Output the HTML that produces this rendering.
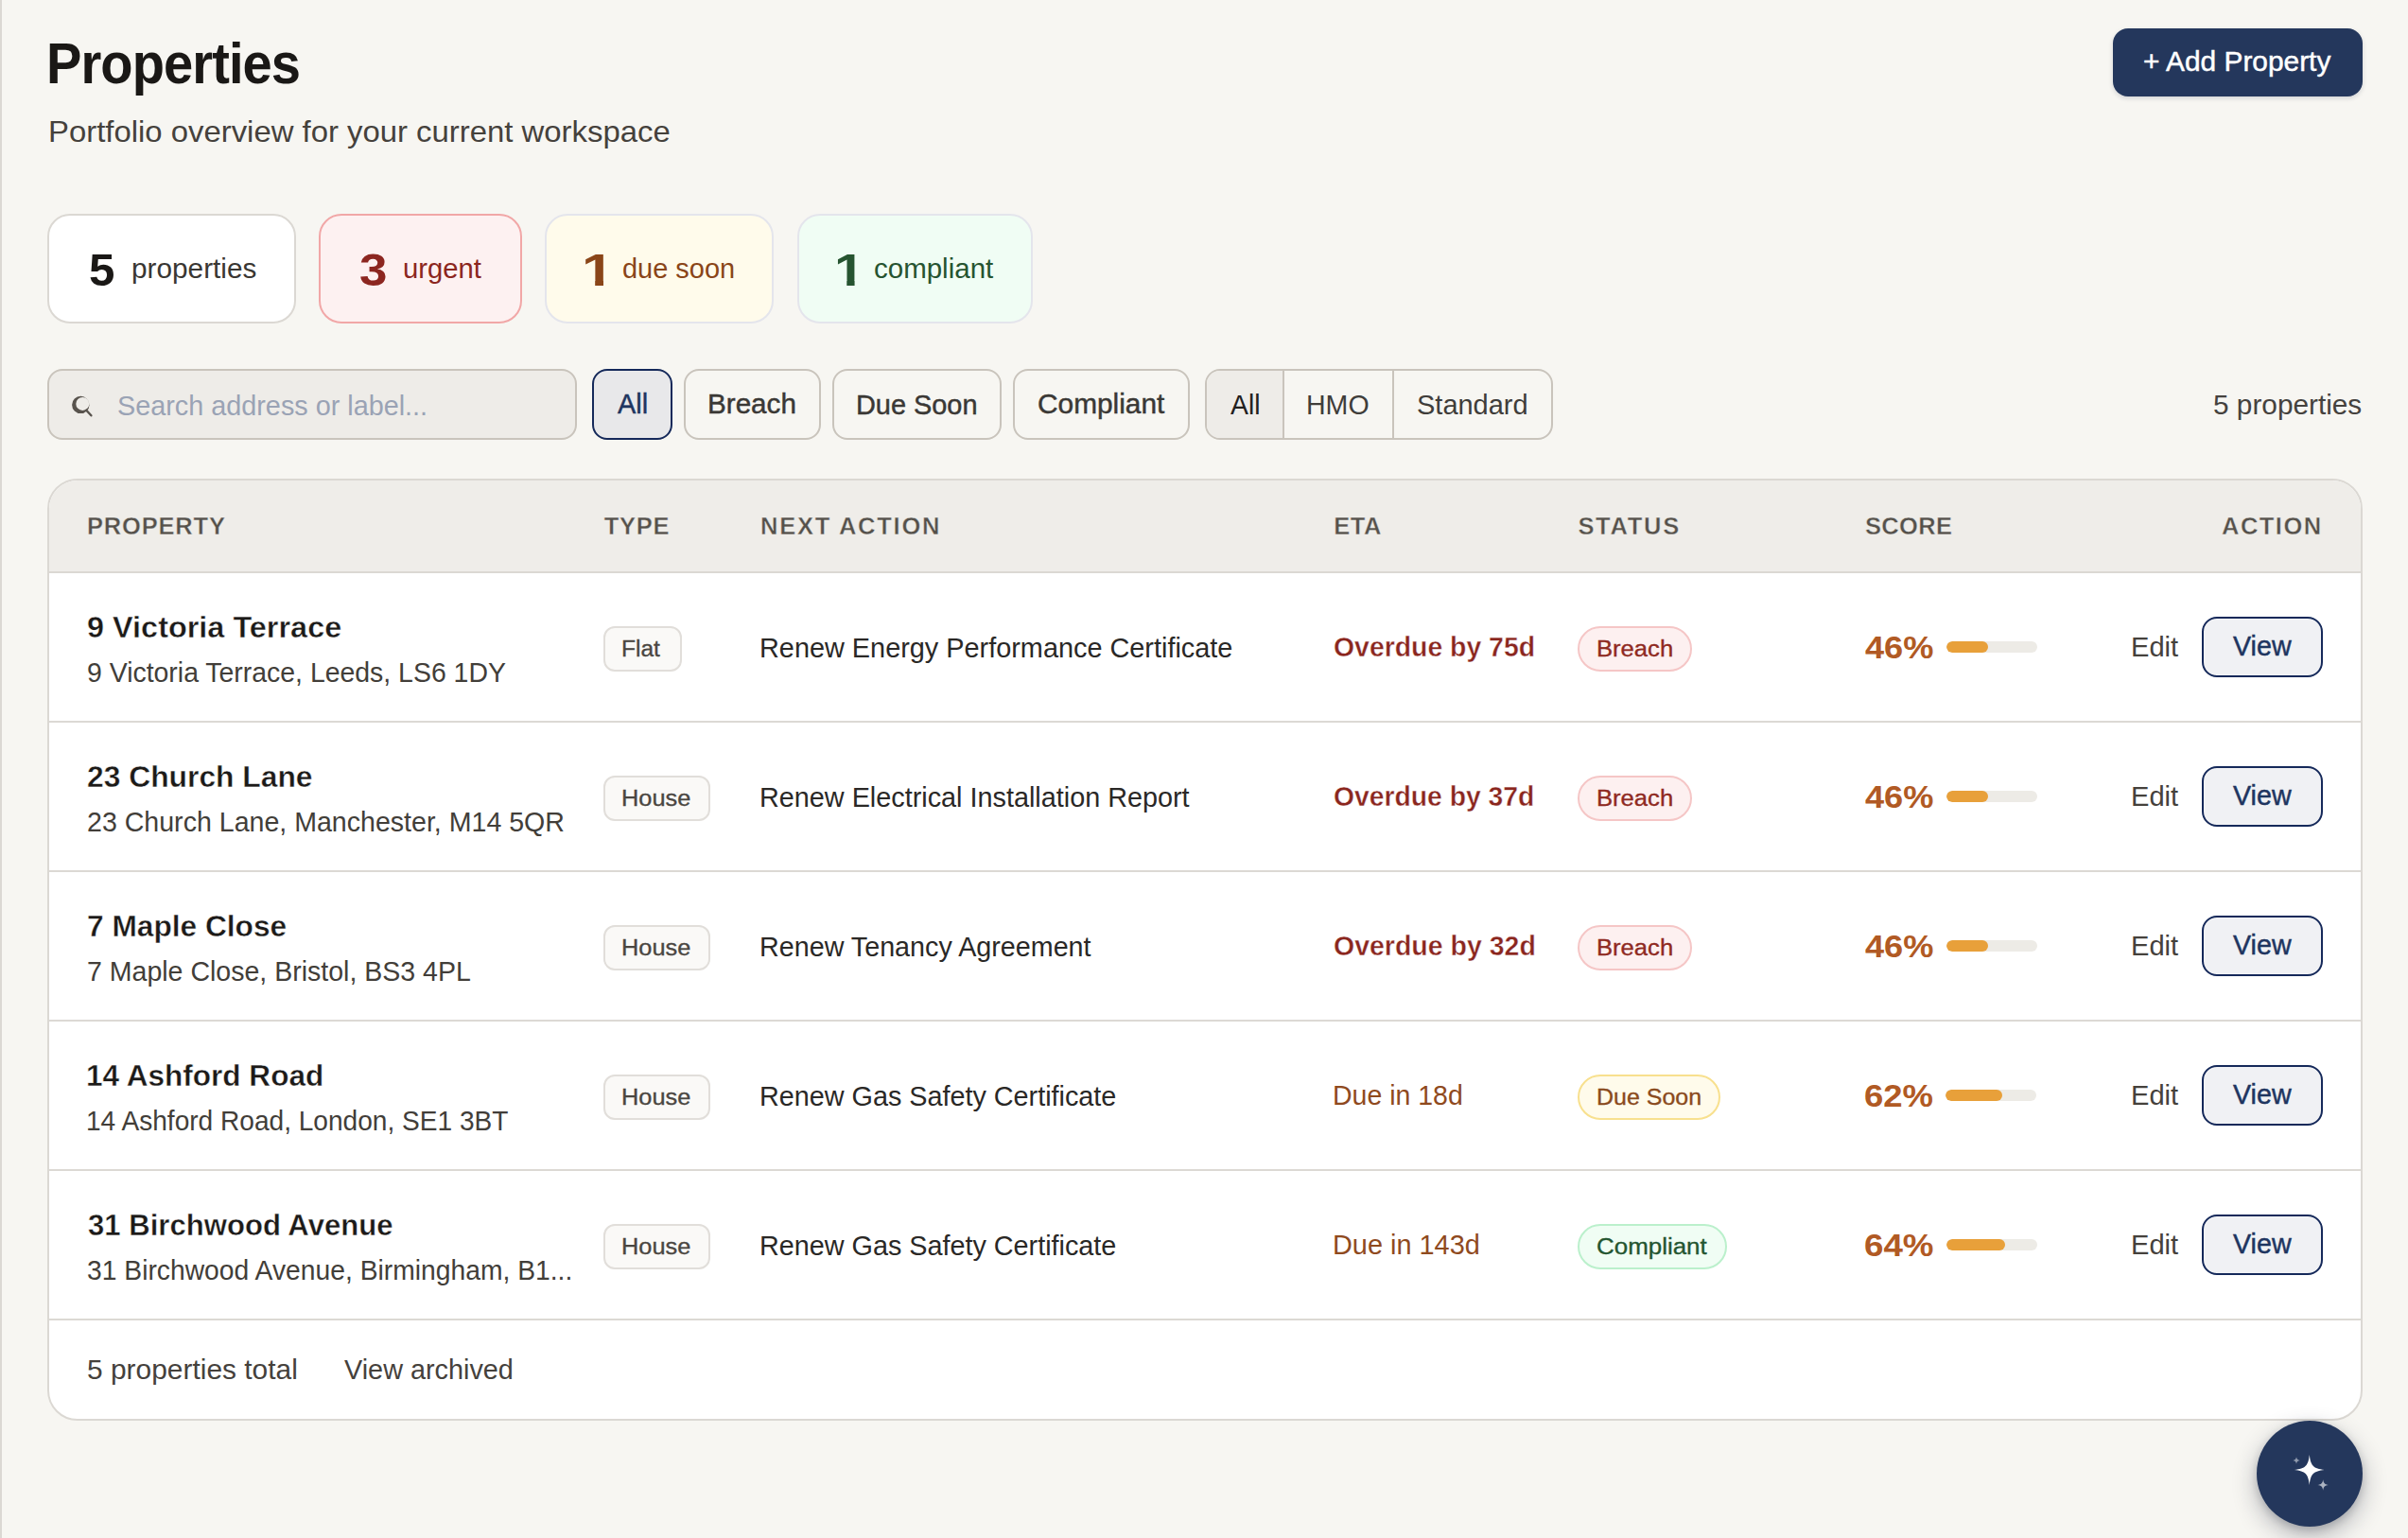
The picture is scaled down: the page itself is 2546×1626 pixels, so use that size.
<!DOCTYPE html>
<html lang="en"><head><meta charset="utf-8"><title>Properties</title>
<style>
*{box-sizing:border-box;margin:0;padding:0}
html,body{width:2546px;height:1626px;overflow:hidden}
@media (max-width:1400px){html{zoom:.5}}
body{background:#f7f6f2;font-family:"Liberation Sans",sans-serif;color:#1a1816;position:relative}
span,b,h1,p,a,em{position:absolute;white-space:nowrap;font-style:normal;text-decoration:none;display:block}
.page{position:absolute;left:0;top:0;width:2546px;height:1626px;border-left:2px solid #dbd8d3}
.abs,.page>*,.head>*,.stats>*,.filters>*,.table>*,.row>*,.thead>*,.tfoot>*,.chips>*,.seg>*{position:absolute}
.head{left:0;top:0;width:2544px;height:200px}
.add{left:2232px;top:30px;width:264px;height:72px;border-radius:16px;background:#24375c;border:0;box-shadow:0 2px 5px rgba(20,30,60,.16)}
.stats{left:48px;top:226px;width:1100px;height:116px}
.stat{top:0;height:115.5px;border:2px solid #dbd8d3;border-radius:24px;background:#fff}
.s2{background:#fdf1f1;border-color:#f1a7a7}
.s3{background:#fffbeb;border-color:#e4e5ec}
.s4{background:#f0fdf4;border-color:#e4e5ec}
.filters{left:48px;top:390px;width:2448px;height:75px}
.search{left:0;top:0;width:560px;height:75px;border:2px solid #c9c4bc;border-radius:16px;background:#eeece8}
.chips{left:0;top:0;height:75px}
.chip{top:0;height:75px;border:2px solid #c9c4bc;border-radius:16px;background:transparent}
.chip.on{border:2px solid #15295a;background:#e8e8ea}
.seg{left:1224px;top:0;width:368px;height:75px;border:2px solid #c9c4bc;border-radius:16px;overflow:hidden}
.seg>div{top:0;height:71px}
.seg .on{background:#eeece8}
.seg .dv{border-left:2px solid #c9c4bc}
.table{left:48px;top:506px;width:2448px;height:996px;border:2px solid #dbd8d3;border-radius:32px;background:#fff;overflow:hidden}
.thead{left:0;top:0;width:2444px;height:98px;background:#efede9;border-bottom:2px solid #dbd8d3}
.row{left:0;width:2444px;height:158px;border-bottom:2px solid #dcd9d4}
.tfoot{left:0;top:888px;width:2444px;height:104px}
.tag{border:2px solid #e1deda;background:#faf9f7;border-radius:12px;height:47.5px}
.pill{border:2px solid #f5c6c6;background:#fdf0f0;border-radius:24px;height:47.5px}
.pill.due{border-color:#f8e08e;background:#fffbeb}
.pill.ok{border-color:#bbf0cc;background:#f0fdf4}
.bar{left:2006px;top:72px;width:96px;height:12px;border-radius:6px;background:#edebe6;overflow:hidden}
.bar i{position:absolute;left:0;top:0;height:12px;border-radius:6px;background:#e8a03a;display:block}
.view{left:2276px;top:46px;width:127.5px;height:63.5px;border:2px solid #15295a;border-radius:16px;background:#f0f1f4}
.fab{left:2384px;top:1502px;width:112px;height:112px;border-radius:56px;background:#24375c;box-shadow:0 10px 26px rgba(20,25,45,.30),0 3px 8px rgba(20,25,45,.18)}
</style></head>
<body>
<main class="page">
<header class="head">
<h1 style="left:46.89px;top:33.00px;font-size:60.5px;line-height:68px;font-weight:700;color:#1a1816;letter-spacing:-1.000px;transform:scaleX(0.9269);transform-origin:0 0;">Properties</h1>
<p style="left:48.65px;top:121.20px;font-size:32px;line-height:36px;font-weight:400;color:#45413c;transform:scaleX(1.0272);transform-origin:0 0;">Portfolio overview for your current workspace</p>
<div class="add"><span style="left:31.97px;top:18.75px;font-size:28.9px;line-height:32px;font-weight:400;color:#ffffff;transform:scaleX(1.0333);transform-origin:0 0;-webkit-text-stroke:0.45px currentColor;">+ Add Property</span></div>
</header>
<section class="stats">
<div class="stat s1" style="left:0.00px;width:262.50px"><b style="left:41.76px;top:30.50px;font-size:47.5px;line-height:53px;font-weight:700;color:#1a1816;transform:scaleX(1.0360);transform-origin:0 0;">5</b><span style="left:86.59px;top:39.00px;font-size:29.5px;line-height:33px;font-weight:400;color:#3a3733;transform:scaleX(1.0090);transform-origin:0 0;">properties</span></div>
<div class="stat s2" style="left:287.00px;width:215.00px"><b style="left:40.64px;top:30.50px;font-size:47.5px;line-height:53px;font-weight:700;color:#8c2620;transform:scaleX(1.1146);transform-origin:0 0;">3</b><span style="left:87.01px;top:39.00px;font-size:29.5px;line-height:33px;font-weight:400;color:#8c2620;transform:scaleX(0.9915);transform-origin:0 0;">urgent</span></div>
<div class="stat s3" style="left:526.40px;width:242.00px"><b style="left:36.39px;top:30.50px;font-size:47.5px;line-height:53px;font-weight:700;color:#8a4518;transform:scaleX(1.2956);transform-origin:0 0;clip-path:polygon(0 0,100% 0,100% 38.1px,17.75px 38.1px,17.75px 100%,10.94px 100%,10.94px 38.1px,0 38.1px);">1</b><span style="left:79.62px;top:39.00px;font-size:29.5px;line-height:33px;font-weight:400;color:#8a4518;transform:scaleX(0.9813);transform-origin:0 0;">due soon</span></div>
<div class="stat s4" style="left:793.20px;width:249.30px"><b style="left:36.60px;top:30.50px;font-size:47.5px;line-height:53px;font-weight:700;color:#265430;transform:scaleX(1.2155);transform-origin:0 0;clip-path:polygon(0 0,100% 0,100% 38.1px,17.75px 38.1px,17.75px 100%,10.94px 100%,10.94px 38.1px,0 38.1px);">1</b><span style="left:78.80px;top:39.00px;font-size:29.5px;line-height:33px;font-weight:400;color:#265430;">compliant</span></div>
</section>
<section class="filters">
<div class="search"><svg class="abs" style="left:22px;top:24px" width="28" height="28" viewBox="74 416 28 28"><path fill="#58534d" fill-rule="evenodd" d="M76.1 427.9a9.2 9.2 0 1 0 18.4 0a9.2 9.2 0 1 0 -18.4 0ZM80.3 426.9a7 7 0 1 0 14 0a7 7 0 1 0 -14 0Z"/><path d="M91.3 433.8L96.4 439.3" stroke="#58534d" stroke-width="2.4" stroke-linecap="round"/></svg><span style="left:72.02px;top:20.00px;font-size:29.5px;line-height:33px;font-weight:400;color:#9aa3b5;transform:scaleX(0.9761);transform-origin:0 0;">Search address or label...</span></div>
<div class="chips">
<div class="chip on" style="left:576.25px;width:84.50px"><span style="left:24.75px;top:18.75px;font-size:28.9px;line-height:32px;font-weight:400;color:#1e3560;-webkit-text-stroke:0.45px currentColor;">All</span></div>
<div class="chip" style="left:673.25px;width:144.25px"><span style="left:23.20px;top:18.75px;font-size:28.9px;line-height:32px;font-weight:400;color:#3a3835;transform:scaleX(1.0258);transform-origin:0 0;-webkit-text-stroke:0.45px currentColor;">Breach</span></div>
<div class="chip" style="left:830.00px;width:178.75px"><span style="left:23.00px;top:20.25px;font-size:28.9px;line-height:32px;font-weight:400;color:#3a3835;-webkit-text-stroke:0.45px currentColor;">Due Soon</span></div>
<div class="chip" style="left:1021.25px;width:186.25px"><span style="left:23.72px;top:18.75px;font-size:28.9px;line-height:32px;font-weight:400;color:#3a3835;transform:scaleX(1.0326);transform-origin:0 0;-webkit-text-stroke:0.45px currentColor;">Compliant</span></div>
</div>
<div class="seg" style="left:1224.25px;width:367.25px">
<div class="on" style="left:0.00px;width:79.75px"><span style="left:25.00px;top:19.25px;font-size:29.5px;line-height:33px;font-weight:400;color:#22201e;transform:scaleX(0.9606);transform-origin:0 0;">All</span></div>
<div class="dv" style="left:79.75px;width:116.00px"><span style="left:23.31px;top:19.25px;font-size:29.5px;line-height:33px;font-weight:400;color:#3f3d3a;transform:scaleX(0.9677);transform-origin:0 0;">HMO</span></div>
<div class="dv" style="left:195.75px;width:167.50px"><span style="left:24.27px;top:19.25px;font-size:29.5px;line-height:33px;font-weight:400;color:#3f3d3a;transform:scaleX(0.9823);transform-origin:0 0;">Standard</span></div>
</div>
<span class="count" style="left:2290.49px;top:20.50px;font-size:29.5px;line-height:33px;font-weight:400;color:#45423e;transform:scaleX(1.0095);transform-origin:0 0;">5 properties</span>
</section>
<section class="table">
<div class="thead">
<span style="left:40.00px;top:33.50px;font-size:25.5px;line-height:28px;font-weight:700;color:#55514b;letter-spacing:0.819px;-webkit-text-stroke:0.4px #efede9;">PROPERTY</span>
<span style="left:586.75px;top:33.50px;font-size:25.5px;line-height:28px;font-weight:700;color:#55514b;letter-spacing:0.719px;-webkit-text-stroke:0.4px #efede9;">TYPE</span>
<span style="left:752.00px;top:33.50px;font-size:25.5px;line-height:28px;font-weight:700;color:#55514b;letter-spacing:1.758px;-webkit-text-stroke:0.4px #efede9;">NEXT ACTION</span>
<span style="left:1358.25px;top:33.50px;font-size:25.5px;line-height:28px;font-weight:700;color:#55514b;letter-spacing:0.529px;-webkit-text-stroke:0.4px #efede9;">ETA</span>
<span style="left:1616.40px;top:33.50px;font-size:25.5px;line-height:28px;font-weight:700;color:#55514b;letter-spacing:1.719px;-webkit-text-stroke:0.4px #efede9;">STATUS</span>
<span style="left:1920.00px;top:33.50px;font-size:25.5px;line-height:28px;font-weight:700;color:#55514b;letter-spacing:0.332px;-webkit-text-stroke:0.4px #efede9;">SCORE</span>
<span style="left:2297.00px;top:33.50px;font-size:25.5px;line-height:28px;font-weight:700;color:#55514b;letter-spacing:1.485px;-webkit-text-stroke:0.4px #efede9;">ACTION</span>
</div>
<div class="row" style="top:98px">
<span class="ttl" style="left:39.98px;top:39.00px;font-size:31.8px;line-height:36px;font-weight:700;color:#1c1a18;transform:scaleX(1.0199);transform-origin:0 0;-webkit-text-stroke:0.4px #fff;">9 Victoria Terrace</span>
<span class="adr" style="left:40.04px;top:87.50px;font-size:29.5px;line-height:33px;font-weight:400;color:#423e39;transform:scaleX(0.9634);transform-origin:0 0;">9 Victoria Terrace, Leeds, LS6 1DY</span>
<div class="tag" style="left:586.25px;top:56px;width:82.25px"><span style="left:16.51px;top:8.25px;font-size:24.7px;line-height:27px;font-weight:400;color:#4a4641;transform:scaleX(0.9949);transform-origin:0 0;-webkit-text-stroke:0.35px currentColor;">Flat</span></div>
<span class="nxt" style="left:751.04px;top:62.25px;font-size:29.5px;line-height:33px;font-weight:400;color:#2a2826;transform:scaleX(0.9781);transform-origin:0 0;">Renew Energy Performance Certificate</span>
<span class="eta" style="left:1358.29px;top:61.25px;font-size:29.7px;line-height:33px;font-weight:700;color:#8a261e;transform:scaleX(0.9565);transform-origin:0 0;-webkit-text-stroke:0.4px #fff;">Overdue by 75d</span>
<div class="pill " style="left:1616.10px;top:56px;width:120.65px"><span style="left:17.88px;top:8.25px;font-size:24.7px;line-height:27px;font-weight:400;color:#8f2a22;transform:scaleX(1.0372);transform-origin:0 0;-webkit-text-stroke:0.35px currentColor;">Breach</span></div>
<span class="score" style="left:1920.25px;top:60.50px;font-size:32.5px;line-height:36px;font-weight:700;color:#b15a24;transform:scaleX(1.1128);transform-origin:0 0;">46%</span>
<div class="bar" style="left:2006.25px"><i style="width:44.2px"></i></div>
<a style="left:2201.28px;top:61.25px;font-size:29.5px;line-height:33px;font-weight:400;color:#45413c;transform:scaleX(0.9869);transform-origin:0 0;">Edit</a>
<div class="view"><span style="left:30.75px;top:12.75px;font-size:28.9px;line-height:32px;font-weight:400;color:#1e3560;transform:scaleX(0.9922);transform-origin:0 0;-webkit-text-stroke:0.45px currentColor;">View</span></div>
</div>
<div class="row" style="top:256px">
<span class="ttl" style="left:40.00px;top:39.00px;font-size:31.8px;line-height:36px;font-weight:700;color:#1c1a18;-webkit-text-stroke:0.4px #fff;">23 Church Lane</span>
<span class="adr" style="left:40.03px;top:87.50px;font-size:29.5px;line-height:33px;font-weight:400;color:#423e39;transform:scaleX(0.9684);transform-origin:0 0;">23 Church Lane, Manchester, M14 5QR</span>
<div class="tag" style="left:586.25px;top:56px;width:112.25px"><span style="left:17.06px;top:8.25px;font-size:24.7px;line-height:27px;font-weight:400;color:#4a4641;transform:scaleX(1.0275);transform-origin:0 0;-webkit-text-stroke:0.35px currentColor;">House</span></div>
<span class="nxt" style="left:751.05px;top:62.25px;font-size:29.5px;line-height:33px;font-weight:400;color:#2a2826;transform:scaleX(0.9763);transform-origin:0 0;">Renew Electrical Installation Report</span>
<span class="eta" style="left:1358.30px;top:61.25px;font-size:29.7px;line-height:33px;font-weight:700;color:#8a261e;transform:scaleX(0.9530);transform-origin:0 0;-webkit-text-stroke:0.4px #fff;">Overdue by 37d</span>
<div class="pill " style="left:1616.10px;top:56px;width:120.65px"><span style="left:17.88px;top:8.25px;font-size:24.7px;line-height:27px;font-weight:400;color:#8f2a22;transform:scaleX(1.0372);transform-origin:0 0;-webkit-text-stroke:0.35px currentColor;">Breach</span></div>
<span class="score" style="left:1920.25px;top:60.50px;font-size:32.5px;line-height:36px;font-weight:700;color:#b15a24;transform:scaleX(1.1128);transform-origin:0 0;">46%</span>
<div class="bar" style="left:2006.25px"><i style="width:44.2px"></i></div>
<a style="left:2201.28px;top:61.25px;font-size:29.5px;line-height:33px;font-weight:400;color:#45413c;transform:scaleX(0.9869);transform-origin:0 0;">Edit</a>
<div class="view"><span style="left:30.75px;top:12.75px;font-size:28.9px;line-height:32px;font-weight:400;color:#1e3560;transform:scaleX(0.9922);transform-origin:0 0;-webkit-text-stroke:0.45px currentColor;">View</span></div>
</div>
<div class="row" style="top:414px">
<span class="ttl" style="left:40.00px;top:39.00px;font-size:31.8px;line-height:36px;font-weight:700;color:#1c1a18;transform:scaleX(0.9959);transform-origin:0 0;-webkit-text-stroke:0.4px #fff;">7 Maple Close</span>
<span class="adr" style="left:40.03px;top:87.50px;font-size:29.5px;line-height:33px;font-weight:400;color:#423e39;transform:scaleX(0.9669);transform-origin:0 0;">7 Maple Close, Bristol, BS3 4PL</span>
<div class="tag" style="left:586.25px;top:56px;width:112.25px"><span style="left:17.06px;top:8.25px;font-size:24.7px;line-height:27px;font-weight:400;color:#4a4641;transform:scaleX(1.0275);transform-origin:0 0;-webkit-text-stroke:0.35px currentColor;">House</span></div>
<span class="nxt" style="left:751.05px;top:62.25px;font-size:29.5px;line-height:33px;font-weight:400;color:#2a2826;transform:scaleX(0.9731);transform-origin:0 0;">Renew Tenancy Agreement</span>
<span class="eta" style="left:1358.29px;top:61.25px;font-size:29.7px;line-height:33px;font-weight:700;color:#8a261e;transform:scaleX(0.9598);transform-origin:0 0;-webkit-text-stroke:0.4px #fff;">Overdue by 32d</span>
<div class="pill " style="left:1616.10px;top:56px;width:120.65px"><span style="left:17.88px;top:8.25px;font-size:24.7px;line-height:27px;font-weight:400;color:#8f2a22;transform:scaleX(1.0372);transform-origin:0 0;-webkit-text-stroke:0.35px currentColor;">Breach</span></div>
<span class="score" style="left:1920.25px;top:60.50px;font-size:32.5px;line-height:36px;font-weight:700;color:#b15a24;transform:scaleX(1.1128);transform-origin:0 0;">46%</span>
<div class="bar" style="left:2006.25px"><i style="width:44.2px"></i></div>
<a style="left:2201.28px;top:61.25px;font-size:29.5px;line-height:33px;font-weight:400;color:#45413c;transform:scaleX(0.9869);transform-origin:0 0;">Edit</a>
<div class="view"><span style="left:30.75px;top:12.75px;font-size:28.9px;line-height:32px;font-weight:400;color:#1e3560;transform:scaleX(0.9922);transform-origin:0 0;-webkit-text-stroke:0.45px currentColor;">View</span></div>
</div>
<div class="row" style="top:572px">
<span class="ttl" style="left:39.02px;top:39.00px;font-size:31.8px;line-height:36px;font-weight:700;color:#1c1a18;transform:scaleX(0.9921);transform-origin:0 0;-webkit-text-stroke:0.4px #fff;">14 Ashford Road</span>
<span class="adr" style="left:39.10px;top:87.50px;font-size:29.5px;line-height:33px;font-weight:400;color:#423e39;transform:scaleX(0.9517);transform-origin:0 0;">14 Ashford Road, London, SE1 3BT</span>
<div class="tag" style="left:586.25px;top:56px;width:112.25px"><span style="left:17.06px;top:8.25px;font-size:24.7px;line-height:27px;font-weight:400;color:#4a4641;transform:scaleX(1.0275);transform-origin:0 0;-webkit-text-stroke:0.35px currentColor;">House</span></div>
<span class="nxt" style="left:751.05px;top:62.25px;font-size:29.5px;line-height:33px;font-weight:400;color:#2a2826;transform:scaleX(0.9752);transform-origin:0 0;">Renew Gas Safety Certificate</span>
<span class="eta" style="left:1357.32px;top:61.25px;font-size:29.5px;line-height:33px;font-weight:400;color:#8f4a1e;transform:scaleX(0.9657);transform-origin:0 0;">Due in 18d</span>
<div class="pill due" style="left:1616.10px;top:56px;width:150.65px"><span style="left:17.93px;top:8.25px;font-size:24.7px;line-height:27px;font-weight:400;color:#8a4a1c;transform:scaleX(1.0115);transform-origin:0 0;-webkit-text-stroke:0.35px currentColor;">Due Soon</span></div>
<span class="score" style="left:1919.13px;top:60.50px;font-size:32.5px;line-height:36px;font-weight:700;color:#b15a24;transform:scaleX(1.1226);transform-origin:0 0;">62%</span>
<div class="bar" style="left:2005.25px"><i style="width:59.5px"></i></div>
<a style="left:2201.28px;top:61.25px;font-size:29.5px;line-height:33px;font-weight:400;color:#45413c;transform:scaleX(0.9869);transform-origin:0 0;">Edit</a>
<div class="view"><span style="left:30.75px;top:12.75px;font-size:28.9px;line-height:32px;font-weight:400;color:#1e3560;transform:scaleX(0.9922);transform-origin:0 0;-webkit-text-stroke:0.45px currentColor;">View</span></div>
</div>
<div class="row" style="top:730px">
<span class="ttl" style="left:41.00px;top:39.00px;font-size:31.8px;line-height:36px;font-weight:700;color:#1c1a18;transform:scaleX(0.9779);transform-origin:0 0;-webkit-text-stroke:0.4px #fff;">31 Birchwood Avenue</span>
<span class="adr" style="left:40.04px;top:87.50px;font-size:29.5px;line-height:33px;font-weight:400;color:#423e39;transform:scaleX(0.9583);transform-origin:0 0;">31 Birchwood Avenue, Birmingham, B1...</span>
<div class="tag" style="left:586.25px;top:56px;width:112.25px"><span style="left:17.06px;top:8.25px;font-size:24.7px;line-height:27px;font-weight:400;color:#4a4641;transform:scaleX(1.0275);transform-origin:0 0;-webkit-text-stroke:0.35px currentColor;">House</span></div>
<span class="nxt" style="left:751.05px;top:62.25px;font-size:29.5px;line-height:33px;font-weight:400;color:#2a2826;transform:scaleX(0.9752);transform-origin:0 0;">Renew Gas Safety Certificate</span>
<span class="eta" style="left:1357.29px;top:61.25px;font-size:29.5px;line-height:33px;font-weight:400;color:#8f4a1e;transform:scaleX(0.9795);transform-origin:0 0;">Due in 143d</span>
<div class="pill ok" style="left:1616.10px;top:56px;width:157.65px"><span style="left:18.05px;top:8.25px;font-size:24.7px;line-height:27px;font-weight:400;color:#245530;transform:scaleX(1.0500);transform-origin:0 0;-webkit-text-stroke:0.35px currentColor;">Compliant</span></div>
<span class="score" style="left:1919.12px;top:60.50px;font-size:32.5px;line-height:36px;font-weight:700;color:#b15a24;transform:scaleX(1.1302);transform-origin:0 0;">64%</span>
<div class="bar" style="left:2006.25px"><i style="width:61.4px"></i></div>
<a style="left:2201.28px;top:61.25px;font-size:29.5px;line-height:33px;font-weight:400;color:#45413c;transform:scaleX(0.9869);transform-origin:0 0;">Edit</a>
<div class="view"><span style="left:30.75px;top:12.75px;font-size:28.9px;line-height:32px;font-weight:400;color:#1e3560;transform:scaleX(0.9922);transform-origin:0 0;-webkit-text-stroke:0.45px currentColor;">View</span></div>
</div>
<div class="tfoot">
<span style="left:39.99px;top:35.25px;font-size:29.5px;line-height:33px;font-weight:400;color:#45413c;transform:scaleX(1.0141);transform-origin:0 0;">5 properties total</span>
<a style="left:311.75px;top:35.25px;font-size:29.5px;line-height:33px;font-weight:400;color:#45413c;transform:scaleX(0.9769);transform-origin:0 0;">View archived</a>
</div>
</section>
<div class="fab"><svg class="abs" style="left:0;top:0" width="112" height="112" viewBox="2386 1502 112 112"><path fill="#ffffff" d="M2441.80 1538.10C2443.10 1549.80 2446.00 1552.70 2457.70 1554.00C2446.00 1555.30 2443.10 1558.20 2441.80 1569.90C2440.50 1558.20 2437.60 1555.30 2425.90 1554.00C2437.60 1552.70 2440.50 1549.80 2441.80 1538.10Z"/><path fill="rgba(255,255,255,.5)" d="M2428.00 1540.30C2428.45 1542.80 2429.20 1543.55 2431.70 1544.00C2429.20 1544.45 2428.45 1545.20 2428.00 1547.70C2427.55 1545.20 2426.80 1544.45 2424.30 1544.00C2426.80 1543.55 2427.55 1542.80 2428.00 1540.30Z"/><path fill="rgba(255,255,255,.62)" d="M2456.20 1564.30C2456.80 1568.20 2458.00 1569.40 2461.90 1570.00C2458.00 1570.60 2456.80 1571.80 2456.20 1575.70C2455.60 1571.80 2454.40 1570.60 2450.50 1570.00C2454.40 1569.40 2455.60 1568.20 2456.20 1564.30Z"/></svg></div>
</main>
</body></html>
